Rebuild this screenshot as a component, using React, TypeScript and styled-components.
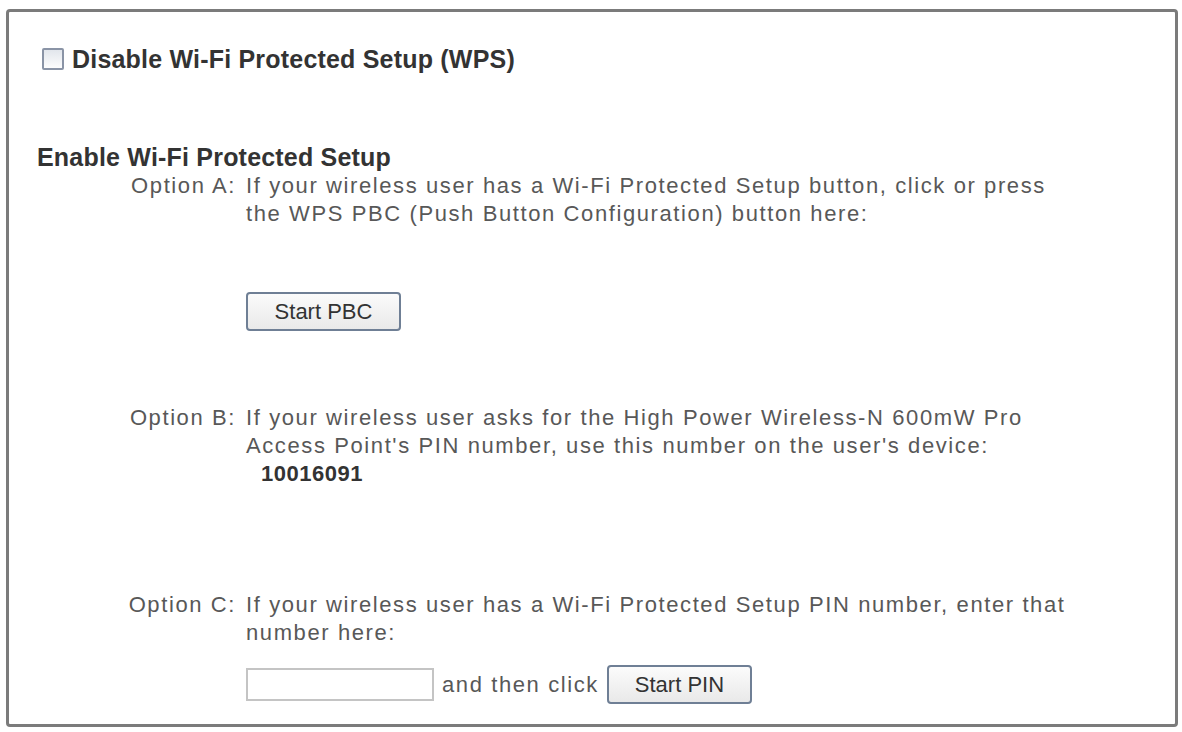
import styled, { createGlobalStyle } from 'styled-components';

const GlobalStyle = createGlobalStyle`
  html, body {
    margin: 0;
    padding: 0;
    background: #fff;
  }
  body {
    font-family: "Liberation Sans", Arial, sans-serif;
  }
`;

const Frame = styled.div`
  box-sizing: border-box;
  margin: 9px 0 0 6px;
  width: 1172px;
  height: 718px;
  border: 3px solid #7b7b7b;
  border-radius: 4px;
  padding: 32px 30px 0 28px;
  background: #fff;
`;

const CheckRow = styled.label`
  display: flex;
  align-items: center;
  height: 30px;
  font-size: 25px;
  font-weight: bold;
  color: #333;
  letter-spacing: 0.2px;
`;

const Box = styled.span`
  box-sizing: border-box;
  width: 22px;
  height: 22px;
  margin: 0 8px 0 5px;
  border: 2px solid #8a94a6;
  border-radius: 2px;
  background: linear-gradient(#e2e6ec, #fdfdfd);
`;

const Heading = styled.div`
  margin-top: 69px;
  line-height: 28px;
  font-size: 25px;
  font-weight: bold;
  color: #333;
  letter-spacing: 0.2px;
`;

const Option = styled.div<{ $gap: number }>`
  display: grid;
  grid-template-columns: 199px 1fr;
  column-gap: 10px;
  margin-top: ${p => p.$gap}px;
  font-size: 22px;
  line-height: 28px;
  letter-spacing: 1.6px;
  color: #585858;
`;

const Label = styled.div`
  text-align: right;
`;

const Body = styled.div`
  display: flex;
  flex-direction: column;
`;

const Pin = styled.div`
  padding-left: 15px;
  font-weight: bold;
  letter-spacing: 0.5px;
  color: #333;
`;

const Action = styled.div<{ $gap: number }>`
  display: flex;
  align-items: center;
  gap: 8px;
  margin-top: ${p => p.$gap}px;
  color: #585858;
`;

const Button = styled.button<{ $w: number }>`
  box-sizing: border-box;
  width: ${p => p.$w}px;
  height: 39px;
  border: 2px solid #6f7f95;
  border-radius: 4px;
  background: linear-gradient(#fbfbfb, #e9e9e9);
  font-family: "Liberation Sans", Arial, sans-serif;
  font-size: 22px;
  color: #333;
  padding: 0;
`;

const PinInput = styled.input`
  box-sizing: border-box;
  width: 188px;
  height: 33px;
  border: 2px solid #c4c4c4;
  background: #fff;
`;

export default function App() {
  return (
    <>
      <GlobalStyle />
      <Frame>
        <CheckRow>
          <Box />
          Disable Wi-Fi Protected Setup (WPS)
        </CheckRow>
        <Heading>Enable Wi-Fi Protected Setup</Heading>

        <Option $gap={1}>
          <Label>Option A:</Label>
          <Body>
            <span>If your wireless user has a Wi-Fi Protected Setup button, click or press</span>
            <span>the WPS PBC (Push Button Configuration) button here:</span>
            <Action $gap={64}>
              <Button $w={155}>Start PBC</Button>
            </Action>
          </Body>
        </Option>

        <Option $gap={73}>
          <Label>Option B:</Label>
          <Body>
            <span>If your wireless user asks for the High Power Wireless-N 600mW Pro</span>
            <span>Access Point's PIN number, use this number on the user's device:</span>
            <Pin>10016091</Pin>
          </Body>
        </Option>

        <Option $gap={103}>
          <Label>Option C:</Label>
          <Body>
            <span>If your wireless user has a Wi-Fi Protected Setup PIN number, enter that</span>
            <span>number here:</span>
            <Action $gap={18}>
              <PinInput type="text" />
              <span>and then click</span>
              <Button $w={145}>Start PIN</Button>
            </Action>
          </Body>
        </Option>
      </Frame>
    </>
  );
}
